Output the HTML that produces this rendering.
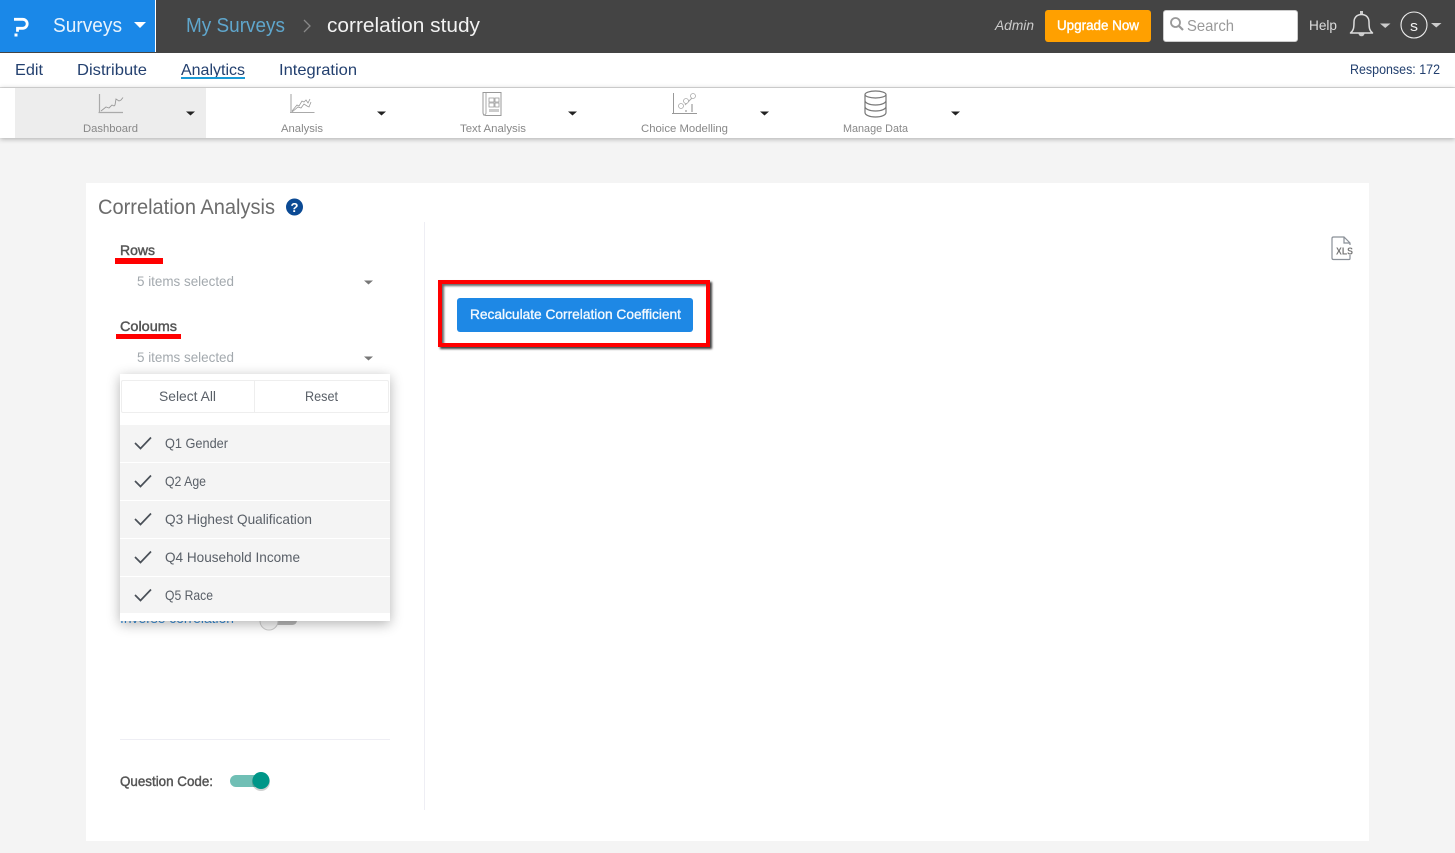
<!DOCTYPE html>
<html><head><meta charset="utf-8"><title>Correlation Analysis</title>
<style>
html,body{margin:0;padding:0}
body{width:1455px;height:853px;overflow:hidden;background:#f4f4f4;position:relative;font-family:"Liberation Sans",sans-serif}
.b{position:absolute}
svg{position:absolute;left:0;top:0}
text{font-family:"Liberation Sans",sans-serif;white-space:pre}
</style></head><body>
<div class="b" style="left:0;top:0;width:1455px;height:53px;background:#444"></div>
<div class="b" style="left:0;top:0;width:155px;height:52px;background:#1a88e8"></div>
<div class="b" style="left:155px;top:0;width:1px;height:52px;background:#fff"></div>
<div class="b" style="left:0;top:53px;width:1455px;height:34px;background:#fff;border-bottom:1px solid #ddd"></div>
<div class="b" style="left:0;top:88px;width:1455px;height:50px;background:#fff;box-shadow:0 1px 5px rgba(0,0,0,.3)"></div>
<div class="b" style="left:15px;top:88px;width:191px;height:50px;background:#ededed"></div>
<div class="b" style="left:86px;top:183px;width:1283px;height:658px;background:#fff"></div>
<div class="b" style="left:424px;top:222px;width:1px;height:588px;background:#eeeef4"></div>
<div class="b" style="left:120px;top:739px;width:270px;height:1px;background:#eeeef4"></div>
<div class="b" style="left:1045px;top:10px;width:106px;height:32px;background:#ffa000;border-radius:3px"></div>
<div class="b" style="left:1163px;top:10px;width:135px;height:32px;background:#fff;border-radius:3px;box-sizing:border-box;border:1px solid #ccc"></div>
<div class="b" style="left:457px;top:298px;width:236px;height:34px;background:#1e88e5;border-radius:3px"></div>
<div class="b" style="left:438px;top:280px;width:272px;height:67px;box-sizing:border-box;border:4px solid #f00;box-shadow:2px 2px 2px rgba(0,0,0,.75),inset 2px 2px 2px rgba(0,0,0,.6)"></div>
<div class="b" style="left:115px;top:258px;width:48px;height:6px;background:#f00"></div>
<div class="b" style="left:116px;top:334px;width:65px;height:5px;background:#f00"></div>

<svg width="1455" height="853" style="z-index:1">
<text x="120" y="623" font-size="14" fill="#3a8fd8" textLength="114" lengthAdjust="spacingAndGlyphs">Inverse correlation</text>
<rect x="262" y="616" width="35" height="9" rx="4.5" fill="#bbb"/>
<circle cx="269" cy="621" r="9" fill="#f5f5f5" stroke="#ccc"/>
</svg>

<div class="b" style="z-index:2;left:120px;top:374px;width:270px;height:247px;background:#fff;box-shadow:0 3px 12px rgba(0,0,0,.3)">
  <div class="b" style="left:1px;top:6px;width:266px;height:31px;border:1px solid #eee;border-radius:2px"></div>
  <div class="b" style="left:134px;top:6px;width:1px;height:32px;background:#eee"></div>
  <div class="b" style="left:0;top:51px;width:270px;height:37px;background:#f4f4f4"></div>
  <div class="b" style="left:0;top:89px;width:270px;height:37px;background:#f4f4f4"></div>
  <div class="b" style="left:0;top:127px;width:270px;height:37px;background:#f4f4f4"></div>
  <div class="b" style="left:0;top:165px;width:270px;height:37px;background:#f4f4f4"></div>
  <div class="b" style="left:0;top:203px;width:270px;height:36px;background:#f4f4f4"></div>
</div>

<svg width="1455" height="853" style="z-index:3">
<!-- logo -->
<path d="M14 19.300h8.700a4.500 4.500 0 0 1 0 9H17.500v3.500" fill="none" stroke="#fff" stroke-width="2.800"/>
<rect x="14.500" y="33.500" width="3" height="3" fill="#fff"/>
<text x="53" y="32" font-size="20" fill="#e8f3fd" textLength="69" lengthAdjust="spacingAndGlyphs">Surveys</text>
<path d="M134 22h12l-6 6z" fill="#fff"/>
<text x="186" y="32" font-size="20" fill="#5fa6cc" textLength="99" lengthAdjust="spacingAndGlyphs">My Surveys</text>
<path d="M304 20l6 6-6 6" fill="none" stroke="#888" stroke-width="1.300"/>
<text x="327" y="32" font-size="20" fill="#f2f2f2" textLength="153" lengthAdjust="spacingAndGlyphs">correlation study</text>

<text x="995" y="30" font-size="14" font-style="italic" fill="#ccc" textLength="39" lengthAdjust="spacingAndGlyphs">Admin</text>
<text x="1057" y="30" font-size="14" fill="#fff" stroke="#fff" stroke-width=".4" textLength="82" lengthAdjust="spacingAndGlyphs">Upgrade Now</text>
<circle cx="1175.500" cy="22.500" r="4.500" fill="none" stroke="#999" stroke-width="1.800"/>
<path d="M1179 26l4 4" stroke="#999" stroke-width="2.200"/>
<text x="1187" y="31" font-size="16" fill="#999" textLength="47" lengthAdjust="spacingAndGlyphs">Search</text>
<text x="1309" y="30" font-size="14" fill="#ddd" textLength="28" lengthAdjust="spacingAndGlyphs">Help</text>
<path d="M1350.500 33c3-2.500 3.500-5 3.500-11 0-4.500 3-7.500 7.500-7.500s7.500 3 7.500 7.500c0 6 .5 8.500 3.500 11z" fill="none" stroke="#ddd" stroke-width="1.500" stroke-linejoin="round"/>
<path d="M1360 11h3v3h-3zM1358.500 33.500a3 2.800 0 0 0 6 0z" fill="#ccc"/>
<path d="M1380 23.500h10.500l-5.250 4.500z" fill="#ccc"/>
<circle cx="1414" cy="25" r="13" fill="none" stroke="#eee" stroke-width="1.100"/>
<text x="1410" y="31" font-size="15" fill="#f2f2f2" textLength="8" lengthAdjust="spacingAndGlyphs">s</text>
<path d="M1431 23h10.500l-5.250 4.500z" fill="#ccc"/>

<g font-size="16" fill="#23406f">
<text x="15" y="75" textLength="28" lengthAdjust="spacingAndGlyphs">Edit</text>
<text x="77" y="75" textLength="70" lengthAdjust="spacingAndGlyphs">Distribute</text>
<text x="181" y="75" textLength="64" lengthAdjust="spacingAndGlyphs">Analytics</text>
<text x="279" y="75" textLength="78" lengthAdjust="spacingAndGlyphs">Integration</text>
</g>
<rect x="181" y="77" width="64" height="2" fill="#1a9ad6"/>
<text x="1350" y="74" font-size="14" fill="#23406f" textLength="90" lengthAdjust="spacingAndGlyphs">Responses: 172</text>

<g font-size="11" fill="#888">
<text x="83" y="132" textLength="55" lengthAdjust="spacingAndGlyphs">Dashboard</text>
<text x="281" y="132" textLength="42" lengthAdjust="spacingAndGlyphs">Analysis</text>
<text x="460" y="132" textLength="66" lengthAdjust="spacingAndGlyphs">Text Analysis</text>
<text x="641" y="132" textLength="87" lengthAdjust="spacingAndGlyphs">Choice Modelling</text>
<text x="843" y="132" textLength="65" lengthAdjust="spacingAndGlyphs">Manage Data</text>
</g>
<g fill="#222">
<path d="M186 111.500h9l-4.500 4z"/><path d="M377 111.500h9l-4.500 4z"/><path d="M568 111.500h9l-4.500 4z"/><path d="M760 111.500h9l-4.500 4z"/><path d="M951 111.500h9l-4.500 4z"/>
</g>
<!-- dashboard -->
<path d="M99.500 94v19M98.500 112.500h24.500" stroke="#aaa" stroke-width="1.200" fill="none"/>
<path d="M101 111l5-4 3 1 3-3 2 1 1-1 1-6 3 2 2-1 2-2.500" fill="none" stroke="#999" stroke-width=".9"/>
<!-- analysis -->
<path d="M291 94v19M290 112.500h24.500" stroke="#aaa" stroke-width="1.100" fill="none"/>
<path d="M292 111l5-6 2 1 3-5 2 1 2-2 2 3 2-4M292 112l6-5 3 1 3-4 3 2 2 1 2-5" fill="none" stroke="#999" stroke-width=".8"/>
<!-- text analysis -->
<path d="M483 92.500h18v23h-15q-3 0-3-3z" fill="none" stroke="#999" stroke-width="1"/>
<path d="M486 93v20q0 2-3 2" fill="none" stroke="#aaa" stroke-width="1"/>
<path d="M489 98h5v4h-5zM495 98h4v4h-4zM489 103h5v4h-5zM495 103h4v4h-4z" fill="none" stroke="#999" stroke-width=".8"/>
<path d="M489 109h10v3h-10z" fill="#ccc"/>
<!-- choice -->
<path d="M673.500 93v20M672 113.500h25" stroke="#999" stroke-width="1" fill="none"/>
<path d="M685 105l9-9" stroke="#aaa" stroke-width="1" fill="none"/>
<circle cx="681" cy="106" r="2.500" fill="#fff" stroke="#aaa" stroke-width=".8"/>
<circle cx="686" cy="101" r="2.500" fill="#fff" stroke="#aaa" stroke-width=".8"/>
<circle cx="693" cy="96" r="2.500" fill="#fff" stroke="#aaa" stroke-width=".8"/>
<path d="M686 110v2M692 104v8" stroke="#888" stroke-width="1"/>
<!-- database -->
<ellipse cx="875.500" cy="94.500" rx="10.500" ry="3.500" fill="none" stroke="#777" stroke-width="1.200"/>
<path d="M865 94.500v18c0 2.500 4.500 4.500 10.500 4.500s10.500-2 10.500-4.500v-18M865 100.500c0 2.500 4.500 4.500 10.500 4.500s10.500-2 10.500-4.500M865 106.500c0 2.500 4.500 4.500 10.500 4.500s10.500-2 10.500-4.500" fill="none" stroke="#777" stroke-width="1.200"/>

<text x="98" y="214" font-size="21" fill="#6c6c6c" textLength="177" lengthAdjust="spacingAndGlyphs">Correlation Analysis</text>
<circle cx="294.500" cy="207" r="8.500" fill="#0b4a94"/>
<text x="290.500" y="212" font-size="13" font-weight="bold" fill="#fff">?</text>
<text x="120" y="255" font-size="14" fill="#555" stroke="#555" stroke-width=".45" textLength="35" lengthAdjust="spacingAndGlyphs">Rows</text>
<text x="120" y="331" font-size="14" fill="#555" stroke="#555" stroke-width=".45" textLength="57" lengthAdjust="spacingAndGlyphs">Coloums</text>
<text x="137" y="286" font-size="14" fill="#a3a9ae" textLength="97" lengthAdjust="spacingAndGlyphs">5 items selected</text>
<text x="137" y="362" font-size="14" fill="#a3a9ae" textLength="97" lengthAdjust="spacingAndGlyphs">5 items selected</text>
<path d="M364 280.500h9l-4.500 4z" fill="#777"/><path d="M364 356.500h9l-4.500 4z" fill="#777"/>
<g font-size="14" fill="#5a6068">
<text x="159" y="401" textLength="57" lengthAdjust="spacingAndGlyphs">Select All</text>
<text x="305" y="401" textLength="33" lengthAdjust="spacingAndGlyphs">Reset</text>
<text x="165" y="448" textLength="63" lengthAdjust="spacingAndGlyphs">Q1 Gender</text>
<text x="165" y="486" textLength="41" lengthAdjust="spacingAndGlyphs">Q2 Age</text>
<text x="165" y="524" textLength="147" lengthAdjust="spacingAndGlyphs">Q3 Highest Qualification</text>
<text x="165" y="562" textLength="135" lengthAdjust="spacingAndGlyphs">Q4 Household Income</text>
<text x="165" y="600" textLength="48" lengthAdjust="spacingAndGlyphs">Q5 Race</text>
</g>
<g fill="none" stroke="#4a5058" stroke-width="1.700">
<path d="M135 443l5.500 5.500 10.500-11"/><path d="M135 481l5.500 5.500 10.500-11"/><path d="M135 519l5.500 5.500 10.500-11"/><path d="M135 557l5.500 5.500 10.500-11"/><path d="M135 595l5.500 5.500 10.500-11"/>
</g>
<text x="470" y="319" font-size="14" fill="#f4f9fe" stroke="#f4f9fe" stroke-width=".35" textLength="211" lengthAdjust="spacingAndGlyphs">Recalculate Correlation Coefficient</text>
<path d="M1332 238.500q0-1.500 1.500-1.500h10.500l6 6v15.500q0 1-1 1h-15.500q-1.500 0-1.500-1.500zM1344 237v6h6" fill="none" stroke="#8a9098" stroke-width="1.200"/>
<rect x="1335" y="245" width="18" height="10" fill="#fff"/>
<text x="1336" y="254.500" font-size="10" font-weight="bold" fill="#777" textLength="17" lengthAdjust="spacingAndGlyphs">XLS</text>
<text x="120" y="786" font-size="14" fill="#555" stroke="#555" stroke-width=".45" textLength="93" lengthAdjust="spacingAndGlyphs">Question Code:</text>
<rect x="230" y="775" width="32" height="12" rx="6" fill="#70bfb5"/>
<circle cx="261" cy="782" r="9" fill="#000" opacity=".18"/>
<circle cx="261" cy="780.500" r="8.500" fill="#009688"/>
</svg>
</body></html>
